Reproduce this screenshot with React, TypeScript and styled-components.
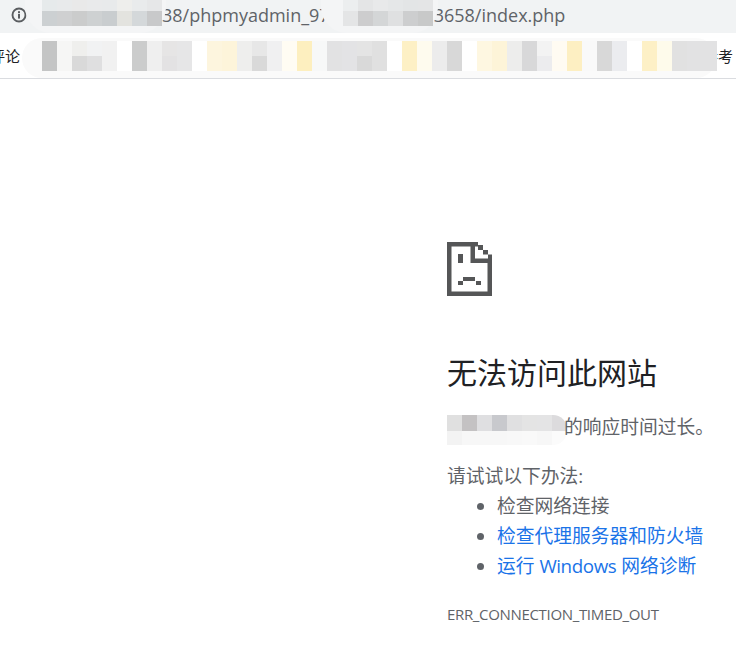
import React from "react";
import styled, { createGlobalStyle } from "styled-components";

const GlobalStyle = createGlobalStyle`
  html, body {
    margin: 0;
    padding: 0;
    background: #fff;
    overflow: hidden;
  }
  body {
    font-family: "Open Sans", "Noto Sans CJK SC", sans-serif;
  }
`;

const Page = styled.div`
  width: 736px;
  height: 650px;
  overflow: hidden;
`;

const AddressBar = styled.div`
  height: 33px;
  background: #f1f3f4;
  display: flex;
  align-items: center;
  padding-left: 11px;
  overflow: hidden;
`;

const UrlText = styled.span`
  font-size: 18px;
  line-height: 31px;
  margin-bottom: 2px;
  color: #5f6368;
  white-space: nowrap;
`;

const MaskBlob = styled.div<{ $width: number; $left: number; $bg: string }>`
  position: relative;
  flex: none;
  height: 33px;
  width: ${(p) => p.$width}px;
  margin-left: ${(p) => p.$left}px;
  margin-right: -4px;
  background: ${(p) => p.$bg};
  border-radius: 0 0 26px 26px;
  z-index: 1;
`;

const CellGrid = styled.div<{ $cols: number; $rows: string }>`
  display: grid;
  grid-template-columns: repeat(${(p) => p.$cols}, 15px);
  grid-template-rows: ${(p) => p.$rows};
`;

const UrlCells = styled(CellGrid)`
  position: absolute;
  top: 0;
  left: ${(p) => (p.$cols === 8 ? 17 : 22)}px;
`;

const Cell = styled.div<{ $color: string }>`
  background: ${(p) => p.$color};
`;

const BookmarkBar = styled.div`
  position: relative;
  height: 46px;
  box-sizing: border-box;
  border-bottom: 1px solid #dadce0;
  display: flex;
  align-items: center;
  justify-content: space-between;
  font-size: 15px;
  color: #202124;
  overflow: hidden;
`;

const ClippedLeft = styled.span`
  margin-left: -10px;
`;

const ClippedRight = styled.span`
  margin-right: 3px;
`;

const BookmarkMask = styled.div`
  position: absolute;
  left: 22px;
  top: 5px;
  width: 694px;
  height: 40px;
  background: #fafafa;
  border-radius: 20px;
  padding: 3px 0 0 20px;
  box-sizing: border-box;
`;

const Main = styled.main`
  padding: 163px 0 0 447px;
`;

const SadFile = styled.svg`
  display: block;
  width: 45px;
  height: 54px;
`;

const InfoGlyph = styled.svg`
  flex: none;
  width: 16px;
  height: 16px;
  margin-bottom: 3px;
`;

const Title = styled.h1`
  margin: 59px 0 0;
  font-size: 30px;
  line-height: 36px;
  font-weight: 400;
  color: #202124;
`;

const Summary = styled.div`
  display: flex;
  align-items: flex-start;
  margin-top: 21px;
  font-size: 18.75px;
  line-height: 30px;
  color: #5f6368;
  white-space: nowrap;
`;

const SummaryMask = styled(CellGrid)`
  flex: none;
  width: 120px;
  height: 30px;
  margin: 3px -3px -3px 0;
  border-radius: 0 14px 14px 0;
  overflow: hidden;
`;

const Suggestions = styled.div`
  margin-top: 19px;
  font-size: 18.75px;
  line-height: 30px;
  color: #5f6368;
`;

const SuggestionList = styled.ul`
  margin: 0;
  padding: 0 0 0 50px;
  list-style: disc;
`;

const SuggestionLink = styled.a`
  color: #1a73e8;
  text-decoration: none;
  white-space: nowrap;
`;

const LatinWord = styled.span`
  letter-spacing: -0.4px;
`;

const ErrorCode = styled.div`
  margin-top: 23px;
  font-size: 15px;
  line-height: 20px;
  letter-spacing: -0.33px;
  color: #5f6368;
  text-transform: uppercase;
  white-space: nowrap;
`;

const urlCellsA = [
  "#e6eaeb", "#e8eaeb", "#e9e9e9", "#e9eaeb", "#e8eaeb", "#eeeeec", "#e9ebec", "#e6e7e8",
  "#ccd0d2", "#cfd0d1", "#cbcccc", "#ced1d2", "#c9cdcf", "#e3e3df", "#d4d8da", "#c8c9ca",
];

const urlCellsB = [
  "#eceeef", "#e4e5e6", "#e8e9ea", "#e5e7e8", "#e3e5e6", "#e4e5e6",
  "#e4e5e6", "#cdcdce", "#d4d6d7", "#dfe0e1", "#cdcecf", "#c8c9c9",
];

const bookmarkTop = [
  "#c4c5c5", "#f6f6f5", "#efefed", "#f1f2f3", "#f1f1f1", "#ffffff", "#cbcccc", "#efefef",
  "#e6e5e5", "#e6e6e7", "#ffffff", "#fdf5de", "#fdf4da", "#eeeeed", "#e7e7e7", "#f0f0f1",
  "#fffcf3", "#fdefbf", "#f7f8f8", "#e2e2e3", "#e3e3e5", "#e4e4e4", "#e0e0e0", "#ffffff",
  "#fdf0c5", "#fefbee", "#ececec", "#d8d8d8", "#ffffff", "#fef7e1", "#fdf4d8", "#ededec",
  "#d8d8d9", "#f3f3f3", "#fffbf2", "#fdefc2", "#f9f9f9", "#d8d8d8", "#ebecef", "#ffffff",
  "#fdf0c6", "#fefbeb", "#e1e1e1", "#e2e2e3", "#e2e2e3",
];

const bookmarkBottom = bookmarkTop.map((color, i) => {
  if (i === 2 || i === 14 || i === 21) return "#d9d9d9";
  if (i === 3) return "#dfdfe0";
  if (i === 8) return "#e3e2e3";
  if (i === 33) return "#ececee";
  return color;
});

const summaryCells = [
  "#e0e0e0", "#c4c2c3", "#dfdfe1", "#c8c9cd", "#e0e0e1", "#e4e4e4", "#e4e4e5", "#dcdbdd",
  "#f3f3f3", "#f7f7f7", "#f7f7f7", "#f7f7f7", "#f8f8f8", "#f9f9f9", "#f7f7f7", "#fbfbfb",
];

const Cells = ({ colors }: { colors: string[] }) => (
  <>
    {colors.map((color, i) => (
      <Cell key={i} $color={color} />
    ))}
  </>
);

const InfoIcon = () => (
  <InfoGlyph viewBox="0 0 16 16">
    <circle cx="8" cy="8" r="6.5" fill="none" stroke="#5a5d60" strokeWidth="1.9" />
    <rect x="7" y="7" width="2" height="4.6" fill="#5a5d60" />
    <rect x="7" y="4.2" width="2" height="2" fill="#5a5d60" />
  </InfoGlyph>
);

const SadFileIcon = () => (
  <SadFile viewBox="0 0 45 54">
    <g fill="#555657">
      <path d="M0 0H31V4.5H4.5V49.5H40.5V17H45V54H0Z" />
      <path d="M23.5 4H28V16.5H41V21H23.5Z" />
      <rect x="31" y="3" width="5" height="5" />
      <rect x="36" y="8" width="5" height="4.5" />
      <rect x="41" y="12.5" width="4" height="4.5" />
      <rect x="11" y="12" width="5" height="9" />
      <rect x="16" y="35" width="12" height="4" />
      <rect x="11" y="39" width="5" height="4" />
      <rect x="29" y="39" width="5" height="4" />
    </g>
  </SadFile>
);

export default function App() {
  return (
    <Page>
      <GlobalStyle />
      <AddressBar>
        <InfoIcon />
        <MaskBlob $width={141} $left={-2} $bg="#f4f5f6">
          <UrlCells $cols={8} $rows="11px 15px">
            <Cells colors={urlCellsA} />
          </UrlCells>
        </MaskBlob>
        <UrlText>38/phpmyadmin_97</UrlText>
        <MaskBlob $width={117} $left={-9} $bg="#f4f5f6">
          <UrlCells $cols={6} $rows="11px 15px">
            <Cells colors={urlCellsB} />
          </UrlCells>
        </MaskBlob>
        <UrlText>3658/index.php</UrlText>
      </AddressBar>
      <BookmarkBar>
        <ClippedLeft>评论</ClippedLeft>
        <ClippedRight>参考</ClippedRight>
        <BookmarkMask>
          <CellGrid $cols={45} $rows="15px 15px">
            <Cells colors={bookmarkTop} />
            <Cells colors={bookmarkBottom} />
          </CellGrid>
        </BookmarkMask>
      </BookmarkBar>
      <Main>
        <SadFileIcon />
        <Title>无法访问此网站</Title>
        <Summary>
          <SummaryMask $cols={8} $rows="16px 14px">
            <Cells colors={summaryCells} />
          </SummaryMask>
          <span>的响应时间过长。</span>
        </Summary>
        <Suggestions>
          请试试以下办法:
          <SuggestionList>
            <li>检查网络连接</li>
            <li>
              <SuggestionLink href="#">检查代理服务器和防火墙</SuggestionLink>
            </li>
            <li>
              <SuggestionLink href="#">
                运行 <LatinWord>Windows</LatinWord> 网络诊断
              </SuggestionLink>
            </li>
          </SuggestionList>
        </Suggestions>
        <ErrorCode>ERR_CONNECTION_TIMED_OUT</ErrorCode>
      </Main>
    </Page>
  );
}
